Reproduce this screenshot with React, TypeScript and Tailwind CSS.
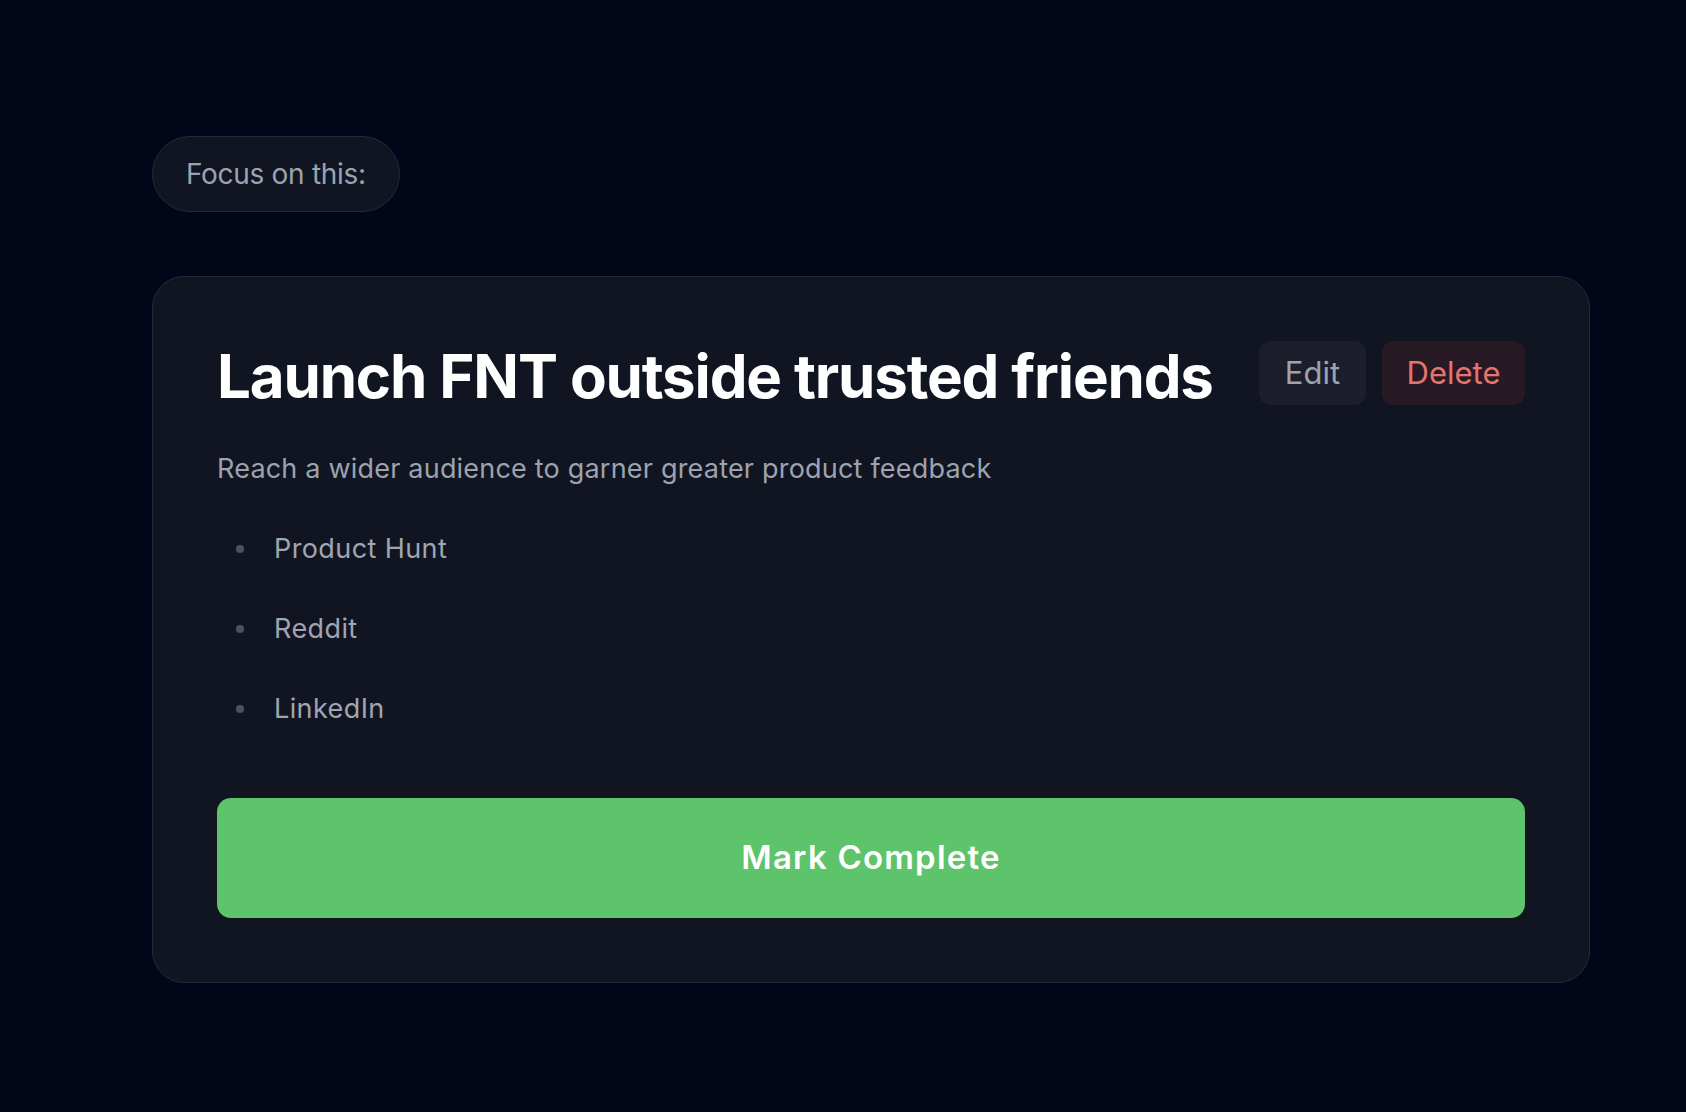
export default function App() {
  const channels = ["Product Hunt", "Reddit", "LinkedIn"];

  return (
    <div
      className="min-h-screen w-full bg-[#020618] pt-[136px] pl-[152px]"
      style={{ fontFamily: "Inter, 'Noto Sans', sans-serif" }}
    >
      <div className="flex w-[1438px] flex-col items-start gap-[64px]">
        <div className="flex h-[76px] items-center rounded-full border border-[#262a37] bg-[#111522] px-[33px] text-[28px] tracking-[-0.3px] text-[#9ca3af]">
          Focus on this:
        </div>

        <div className="w-full rounded-[32px] border border-[#262a37] bg-[#111522] p-16">
          <div className="flex items-start justify-between">
            <h1 className="mt-[5px] text-[60px] font-bold leading-[60px] tracking-[-1.15px] text-white">
              Launch FNT outside trusted friends
            </h1>
            <div className="flex gap-4">
              <button
                type="button"
                className="flex h-[64px] w-[107px] items-center justify-center rounded-xl bg-[#1c1f2b] text-[31px] text-[#9ca3af]"
              >
                Edit
              </button>
              <button
                type="button"
                className="flex h-[64px] w-[143px] items-center justify-center rounded-xl bg-[#271a24] text-[31px] text-[#e5736e]"
              >
                Delete
              </button>
            </div>
          </div>

          <p className="mt-[43px] text-[27px] leading-[40px] tracking-[0.2px] text-[#9ca3af]">
            Reach a wider audience to garner greater product feedback
          </p>

          <ul className="mt-10 flex flex-col gap-10">
            {channels.map((c) => (
              <li
                key={c}
                className="flex items-center gap-[30px] pl-[19px] text-[27px] leading-[40px] tracking-[0.4px] text-[#a1a5b0]"
              >
                <span className="h-2 w-2 rounded-full bg-[#4b5263]" />
                {c}
              </li>
            ))}
          </ul>

          <button
            type="button"
            className="mt-[69px] flex h-[120px] w-full items-center justify-center rounded-[14px] bg-[#5ec46b] text-[33px] font-semibold tracking-[1.2px] text-white"
          >
            Mark Complete
          </button>
        </div>
      </div>
    </div>
  );
}
